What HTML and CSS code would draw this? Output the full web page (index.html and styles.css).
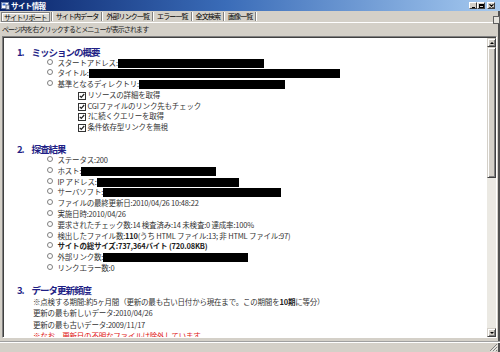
FILE: index.html
```html
<!DOCTYPE html>
<html lang="ja">
<head>
    <meta charset="UTF-8">
    <title>サイト情報</title>
    <link rel="stylesheet" href="styles.css">
</head>
<body>
    <div class="window">
        <div class="titlebar">
            <svg class="app-icon" width="9" height="9" viewBox="0 0 9 9">
                <rect x="0.5" y="1.5" width="7" height="6" fill="#fff" stroke="#6b7fa8"/>
                <rect x="1.5" y="2.5" width="3" height="2" fill="#3a6fd0"/>
                <rect x="5" y="4" width="3.5" height="4.5" fill="#d8dce8" stroke="#44506e" stroke-width="0.8"/>
            </svg>
            <span class="title">サイト情報</span>
            <div class="caption-buttons">
                <span class="cap-btn"><span class="glyph-min"></span></span>
                <span class="cap-btn"><span class="glyph-max"></span></span>
                <span class="cap-btn close">
                    <svg width="5" height="4" viewBox="0 0 5 4"><path d="M0.5 0.3 L4.5 3.7 M4.5 0.3 L0.5 3.7" stroke="#000" stroke-width="1.1"/></svg>
                </span>
            </div>
        </div>

        <div class="tabs">
            <span class="tab active">サイトリポート</span>
            <span class="sep"></span>
            <span class="tab">サイト内データ</span>
            <span class="sep"></span>
            <span class="tab">外部リンク一覧</span>
            <span class="sep"></span>
            <span class="tab">エラー一覧</span>
            <span class="sep"></span>
            <span class="tab">全文検索</span>
            <span class="sep"></span>
            <span class="tab">画像一覧</span>
            <span class="sep"></span>
            <span class="pin"></span>
        </div>

        <div class="hint">ページ内を右クリックするとメニューが表示されます</div>

        <div class="frame">
            <div class="report">
                <h2 class="section-title"><span class="num">1.</span>ミッションの概要</h2>
                <ul class="items">
                    <li>スタートアドレス:<span class="redact" style="width:146px"></span></li>
                    <li>タイトル:<span class="redact" style="width:251px"></span></li>
                    <li>基準となるディレクトリ:<span class="redact" style="width:146px"></span>
                        <ul class="checks">
                            <li><span class="box"><svg width="6" height="6" viewBox="0 0 6 6"><path d="M0.8 2.8 L2.3 4.4 L5.2 1" fill="none" stroke="#222" stroke-width="1.2"/></svg></span>リソースの詳細を取得</li>
                            <li><span class="box"><svg width="6" height="6" viewBox="0 0 6 6"><path d="M0.8 2.8 L2.3 4.4 L5.2 1" fill="none" stroke="#222" stroke-width="1.2"/></svg></span>CGIファイルのリンク先もチェック</li>
                            <li><span class="box"><svg width="6" height="6" viewBox="0 0 6 6"><path d="M0.8 2.8 L2.3 4.4 L5.2 1" fill="none" stroke="#222" stroke-width="1.2"/></svg></span>?に続くクエリーを取得</li>
                            <li><span class="box"><svg width="6" height="6" viewBox="0 0 6 6"><path d="M0.8 2.8 L2.3 4.4 L5.2 1" fill="none" stroke="#222" stroke-width="1.2"/></svg></span>条件依存型リンクを無視</li>
                        </ul>
                    </li>
                </ul>

                <h2 class="section-title"><span class="num">2.</span>探査結果</h2>
                <ul class="items">
                    <li>ステータス:200</li>
                    <li>ホスト:<span class="redact" style="width:135px"></span></li>
                    <li>IP アドレス:<span class="redact" style="width:142px"></span></li>
                    <li>サーバソフト:<span class="redact" style="width:178px"></span></li>
                    <li>ファイルの最終更新日:2010/04/26 10:48:22</li>
                    <li>実施日時:2010/04/26</li>
                    <li>要求されたチェック数:14 検査済み:14 未検査:0 達成率:100%</li>
                    <li>検出したファイル数:<b>110</b>(うち HTML ファイル:13; 非 HTML ファイル:97)</li>
                    <li><b>サイトの総サイズ:737,364バイト (720.08KB)</b></li>
                    <li>外部リンク数:<span class="redact" style="width:145px"></span></li>
                    <li>リンクエラー数:0</li>
                </ul>

                <h2 class="section-title"><span class="num">3.</span>データ更新頻度</h2>
                <div class="note">
                    <div>※点検する期間:約5ヶ月間（更新の最も古い日付から現在まで。この期間を<b>10期</b>に等分）</div>
                    <div>更新の最も新しいデータ:2010/04/26</div>
                    <div>更新の最も古いデータ:2009/11/17</div>
                    <div class="warn">※なお、更新日の不明なファイルは除外しています</div>
                </div>
            </div>
            <div class="scrollbar">
                <div class="sb-btn"><span class="arrow-up"></span></div>
                <div class="sb-thumb"></div>
                <div class="sb-track"></div>
                <div class="sb-btn"><span class="arrow-down"></span></div>
            </div>
        </div>

        <div class="statusbar">
            <svg class="grip" width="10" height="10" viewBox="0 0 10 10">
                <path d="M9 2 L2 9 M9 5 L5 9 M9 8 L8 9" stroke="#808080" stroke-width="1"/>
                <path d="M9.8 2.8 L2.8 9.8 M9.8 5.8 L5.8 9.8" stroke="#fff" stroke-width="0.8"/>
            </svg>
        </div>
    </div>
</body>
</html>
```

FILE: styles.css
```css
* {
    box-sizing: border-box;
}
html, body {
    margin: 0;
    padding: 0;
}
body {
    width: 500px;
    height: 352px;
    overflow: hidden;
    background-color: #d4d0c8;
    font-family: "Noto Sans CJK JP", "Liberation Sans", sans-serif;
    font-size: 7.5px;
    letter-spacing: -0.2px;
    color: #000;
}
.window {
    height: 352px;
    display: flex;
    flex-direction: column;
    box-shadow: inset -2px 0 0 #505050;
}

/* title bar */
.titlebar {
    height: 11px;
    display: flex;
    align-items: center;
    padding-left: 1px;
    background: linear-gradient(to right, #0a246a 0%, #3a6cb8 45%, #a6caf0 100%);
    color: #fff;
}
.app-icon {
    display: block;
}
.title {
    margin-left: 1px;
    font-weight: bold;
    line-height: 11px;
    letter-spacing: -0.6px;
}
.caption-buttons {
    margin-left: auto;
    margin-right: 5px;
    display: flex;
}
.cap-btn {
    width: 8px;
    height: 7px;
    display: flex;
    align-items: center;
    justify-content: center;
    background-color: #d4d0c8;
    border: 1px solid;
    border-color: #fff #404040 #404040 #fff;
}
.cap-btn.close {
    margin-left: 2px;
}
.glyph-min {
    width: 3px;
    height: 1px;
    margin-top: 3px;
    background: #000;
}
.glyph-max {
    width: 5px;
    height: 4px;
    border: 1px solid #000;
    border-top-width: 2px;
}

/* tab buttons */
.tabs {
    height: 12px;
    display: flex;
    align-items: center;
    padding-left: 1px;
    border-bottom: 1px solid #fff;
}
.tab {
    height: 9px;
    line-height: 9px;
    padding: 0 2px;
    font-size: 7px;
    letter-spacing: -0.9px;
    white-space: nowrap;
}
.tab.active {
    height: 10px;
    border: 1px solid #808080;
    box-shadow: inset 1px 1px 0 #fff;
    background-color: #dcd9d2;
}
.sep {
    width: 2px;
    height: 9px;
    margin: 0 1px;
    border-left: 1px solid #808080;
    border-right: 1px solid #fff;
}
.pin {
    margin-left: auto;
    margin-top: 6px;
    width: 7px;
    height: 8px;
    border: 1px solid #606060;
    background-color: #e6e4de;
}

.hint {
    height: 13px;
    padding: 1px 0 0 2px;
    line-height: 11px;
    font-size: 7px;
    letter-spacing: -0.9px;
    color: #222;
}

/* report frame */
.frame {
    height: 302px;
    margin: 0 3px 0 2px;
    display: flex;
    border: 1px solid;
    border-color: #808080 #fff #fff #808080;
}
.report {
    flex: 1;
    overflow: hidden;
    background-color: #fff;
    border-top: 1px solid #404040;
    border-left: 1px solid #404040;
    padding: 7.5px 0 0 13px;
    color: #333;
    line-height: 10.8px;
}
.section-title {
    display: flex;
    margin: 10px 0 0;
    font-size: 9.5px;
    letter-spacing: -1px;
    line-height: 12px;
    font-weight: bold;
    color: #1f1f86;
}
.section-title:first-child {
    margin-top: 0;
}
.num {
    width: 14.5px;
}
.items {
    list-style: none;
    margin: 0;
    padding-left: 29.5px;
}
.items > li {
    white-space: nowrap;
}
.items > li::before {
    content: "";
    display: inline-block;
    width: 4px;
    height: 4px;
    margin-right: 5px;
    border: 1px solid #808080;
    border-radius: 50%;
    vertical-align: 1px;
}
.items b {
    color: #222;
}
.checks {
    list-style: none;
    margin: 0;
    padding-left: 31px;
}
.checks li {
    white-space: nowrap;
}
.box {
    display: inline-flex;
    align-items: center;
    justify-content: center;
    width: 8px;
    height: 8px;
    margin-right: 2px;
    border: 1px solid #333;
    vertical-align: -1px;
}
.box svg {
    display: block;
}
.redact {
    display: inline-block;
    height: 9px;
    background-color: #000;
    vertical-align: -2px;
}
.note {
    padding-left: 16px;
    line-height: 11.5px;
    white-space: nowrap;
}
.note b {
    color: #222;
}
.warn {
    color: #e01010;
}

/* scrollbar */
.scrollbar {
    width: 9px;
    display: flex;
    flex-direction: column;
    border-top: 1px solid #404040;
    background-color: #ebe9e3;
}
.sb-btn {
    height: 9px;
    display: flex;
    align-items: center;
    justify-content: center;
    background-color: #d4d0c8;
    border: 1px solid;
    border-color: #d4d0c8 #404040 #404040 #d4d0c8;
    box-shadow: inset 1px 1px 0 #fff, inset -1px -1px 0 #808080;
}
.arrow-up {
    border-left: 2px solid transparent;
    border-right: 2px solid transparent;
    border-bottom: 2px solid #000;
}
.arrow-down {
    border-left: 2px solid transparent;
    border-right: 2px solid transparent;
    border-top: 2px solid #000;
}
.sb-thumb {
    height: 131px;
    background-color: #d4d0c8;
    border: 1px solid;
    border-color: #d4d0c8 #404040 #404040 #d4d0c8;
    box-shadow: inset 1px 1px 0 #fff, inset -1px -1px 0 #808080;
}
.sb-track {
    flex: 1;
}

/* status bar */
.statusbar {
    flex: 1;
    margin-top: 3px;
    display: flex;
    justify-content: flex-end;
    align-items: flex-end;
    padding-right: 2px;
    border-top: 1px solid #a0a0a0;
    box-shadow: inset 0 1px 0 #fff;
}
.grip {
    display: block;
}
```
